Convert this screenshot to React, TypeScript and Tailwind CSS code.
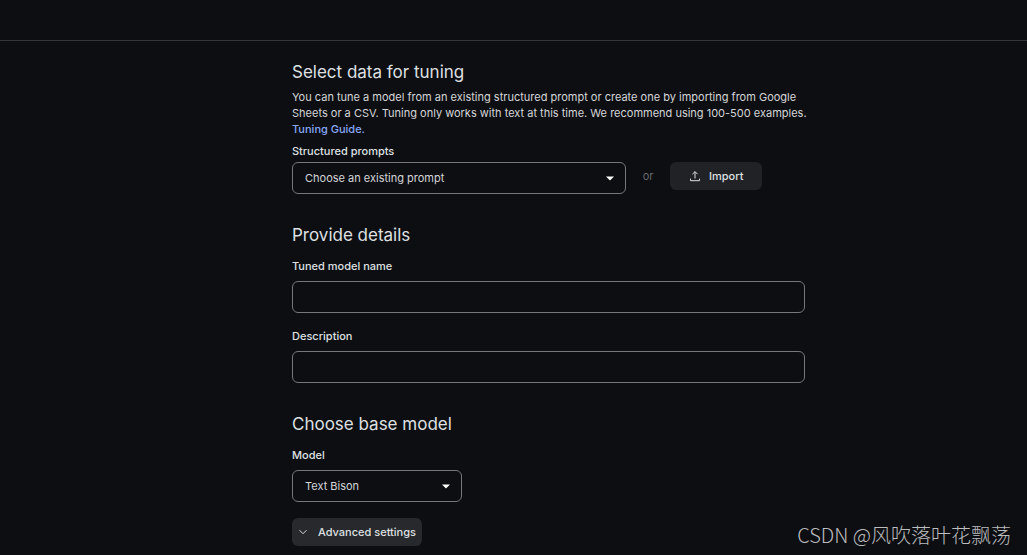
import type { ReactNode } from "react";

interface SectionTitleProps {
  children: ReactNode;
}

function SectionTitle({ children }: SectionTitleProps) {
  return <h2 className="text-[17px] leading-[26px] text-[#dfe0e2]">{children}</h2>;
}

interface FieldLabelProps {
  htmlFor: string;
  children: ReactNode;
}

function FieldLabel({ htmlFor, children }: FieldLabelProps) {
  return (
    <label htmlFor={htmlFor} className="block text-[11px] font-medium leading-4 text-[#dfe0e2]">
      {children}
    </label>
  );
}

interface SelectFieldProps {
  id: string;
  options: string[];
  className: string;
}

function SelectField({ id, options, className }: SelectFieldProps) {
  return (
    <div className={`relative ${className}`}>
      <select
        id={id}
        className="block h-8 w-full appearance-none rounded-md border border-[#75777a] bg-transparent px-3 text-[11px] text-[#d5d6d8]"
      >
        {options.map((option) => (
          <option key={option}>{option}</option>
        ))}
      </select>
      <svg
        viewBox="0 0 8 4"
        className="pointer-events-none absolute inset-y-0 right-3 h-full w-2 fill-white"
        aria-hidden="true"
      >
        <path d="M0 .5h8L4 4.5z" />
      </svg>
    </div>
  );
}

interface TextFieldProps {
  id: string;
  label: string;
}

function TextField({ id, label }: TextFieldProps) {
  return (
    <div className="flex flex-col gap-[7px]">
      <FieldLabel htmlFor={id}>{label}</FieldLabel>
      <input
        id={id}
        type="text"
        className="h-8 w-full rounded-md border border-[#75777a] bg-transparent px-3 text-[11px] text-[#d5d6d8]"
      />
    </div>
  );
}

export default function App() {
  return (
    <div className="relative min-h-screen bg-[#0d0e12] font-['Inter','Noto_Sans_CJK_SC',sans-serif]">
      <header className="h-[41px] border-b border-[#343538]" />

      <main className="pb-2 pl-[70px] pt-[18px]">
        <form className="mx-auto flex max-w-[513px] flex-col gap-7">
          <section>
            <SectionTitle>Select data for tuning</SectionTitle>
            <div className="-mr-2 mt-1 text-[11px] leading-4 text-[#d5d6d8]">
              <p>
                You can tune a model from an existing structured prompt or create one by importing from Google
                Sheets or a CSV. Tuning only works with text at this time. We recommend using 100-500 examples.
              </p>
              <a href="#tuning-guide" className="block w-fit font-medium text-[#87a9f8]">
                Tuning Guide.
              </a>
            </div>
            <div className="mt-1.5">
              <FieldLabel htmlFor="prompt">Structured prompts</FieldLabel>
              <div className="mt-[3px] flex items-start">
                <SelectField id="prompt" options={["Choose an existing prompt"]} className="w-[334px]" />
                <span className="w-11 text-center text-[11px] leading-7 text-[#66686b]">or</span>
                <button
                  type="button"
                  className="flex h-7 items-center gap-2 rounded-md bg-[#212226] px-[19px] text-[11px] font-medium text-[#dfe0e2]"
                >
                  <svg
                    viewBox="0 0 12 12"
                    className="size-3 fill-none stroke-current"
                    aria-hidden="true"
                  >
                    <path d="M6 8.5V1.8M3.4 4.2 6 1.6l2.6 2.6M1.5 8.7v2h9v-2" />
                  </svg>
                  Import
                </button>
              </div>
            </div>
          </section>

          <section>
            <SectionTitle>Provide details</SectionTitle>
            <div className="mt-2.5 flex flex-col gap-[15px]">
              <TextField id="model-name" label="Tuned model name" />
              <TextField id="description" label="Description" />
            </div>
          </section>

          <section>
            <SectionTitle>Choose base model</SectionTitle>
            <div className="mt-2.5 flex flex-col gap-[7px]">
              <FieldLabel htmlFor="model">Model</FieldLabel>
              <SelectField id="model" options={["Text Bison"]} className="w-[170px]" />
            </div>
            <button
              type="button"
              className="mt-4 flex h-7 items-center gap-2.5 rounded-md bg-[#28292c] px-1.5 text-[11px] font-medium text-[#dfe0e2]"
            >
              <svg viewBox="0 0 10 10" className="size-2.5 fill-none stroke-current" aria-hidden="true">
                <path d="M1.5 3.2 5 6.7l3.5-3.5" />
              </svg>
              Advanced settings
            </button>
          </section>
        </form>
      </main>

      <p className="absolute bottom-1.5 right-4 font-['Noto_Sans_CJK_SC',sans-serif] text-xl font-light text-[#bcbdbf]">
        CSDN @风吹落叶花飘荡
      </p>
    </div>
  );
}
